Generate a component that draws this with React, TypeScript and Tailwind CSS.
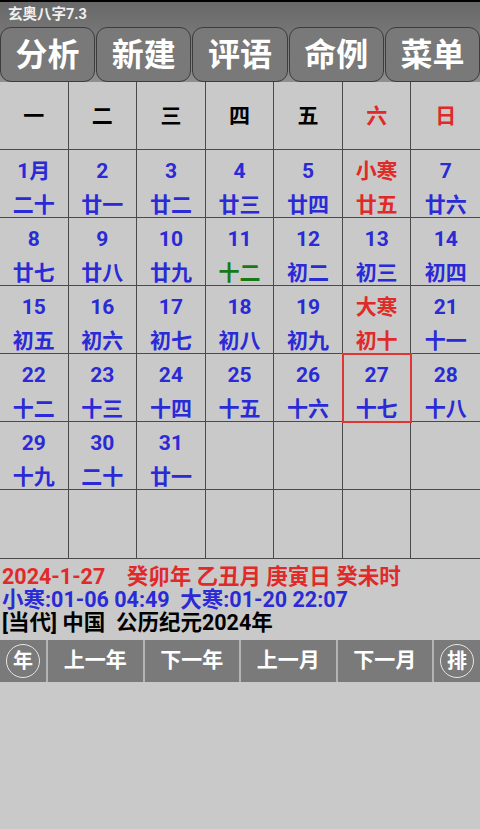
import React from "react";

type Day = { top: string; bottom: string; topColor?: string; bottomColor?: string; today?: boolean };

const BLUE = "text-[#2a2ad6]";
const RED = "text-[#e02a2a]";
const GREEN = "text-[#177a17]";

const tabs = ["分析", "新建", "评语", "命例", "菜单"];
const weekdays = ["一", "二", "三", "四", "五", "六", "日"];

const lunar = [
  "二十", "廿一", "廿二", "廿三", "廿四", "廿五", "廿六",
  "廿七", "廿八", "廿九", "十二", "初二", "初三", "初四",
  "初五", "初六", "初七", "初八", "初九", "初十", "十一",
  "十二", "十三", "十四", "十五", "十六", "十七", "十八",
  "十九", "二十", "廿一",
];

function buildDays(): (Day | null)[] {
  const days: (Day | null)[] = lunar.map((l, i) => {
    const n = i + 1;
    const d: Day = { top: n === 1 ? "1月" : String(n), bottom: l, topColor: BLUE, bottomColor: BLUE };
    if (n === 6) { d.top = "小寒"; d.topColor = RED; d.bottomColor = RED; }
    if (n === 20) { d.top = "大寒"; d.topColor = RED; d.bottomColor = RED; }
    if (n === 11) d.bottomColor = GREEN;
    if (n === 27) d.today = true;
    return d;
  });
  while (days.length < 42) days.push(null);
  return days;
}

export default function App() {
  const days = buildDays();

  return (
    <div className="w-[480px] min-h-[829px] bg-[#c9c9c9] font-['Roboto','Noto_Sans_CJK_SC',sans-serif] font-bold">
      <div className="h-[2px] bg-black" />
      {/* title + tabs */}
      <div className="bg-gradient-to-b from-[#686868] to-[#8e8e8e]">
        <div className="h-[25px] pl-2 text-[14.5px] leading-[25px] text-[#f0f0f0]">玄奥八字7.3</div>
        <div className="flex gap-[1px] h-[55px]">
          {tabs.map((t) => (
            <div
              key={t}
              className="flex-1 rounded-[11px] border border-[#3c3c3c] bg-[#797979] flex items-center justify-center text-white text-[32px] leading-none"
            >
              {t}
            </div>
          ))}
        </div>
      </div>

      {/* calendar */}
      <div className="grid grid-cols-7 border-b border-[#4a4a4a]">
        {weekdays.map((w, i) => (
          <div
            key={w}
            className={`h-[68px] pt-[3px] flex items-center justify-center text-[21px] border-b border-[#4a4a4a] ${i < 6 ? "border-r" : ""} ${i >= 5 ? RED : "text-black"}`}
          >
            {w}
          </div>
        ))}
        {days.map((d, i) => (
          <div
            key={i}
            className={`relative h-[68px] pt-[4px] flex flex-col items-center text-[21px] leading-[34px] border-[#4a4a4a] ${i % 7 < 6 ? "border-r" : ""} ${i < 35 ? "border-b" : ""} ${d?.today ? "z-10 outline-2 outline-[#e03535] -outline-offset-1" : ""}`}
          >
            {d && (
              <>
                <span className={d.topColor}>{d.top}</span>
                <span className={d.bottomColor}>{d.bottom}</span>
              </>
            )}
          </div>
        ))}
      </div>

      {/* info */}
      <div className="pt-[6px] pl-[2px] text-[21.5px] leading-[23px] whitespace-pre">
        <div className={RED}>2024-1-27    癸卯年 乙丑月 庚寅日 癸未时</div>
        <div className={BLUE}>小寒:01-06 04:49  大寒:01-20 22:07</div>
        <div className="text-black">[当代] 中国  公历纪元2024年</div>
      </div>

      {/* bottom bar */}
      <div className="mt-[6px] flex gap-[2px] h-[42px] bg-[#b4b4b4] text-white text-[21px]">
        <div className="w-[46px] bg-[#7a7a7a] flex items-center justify-center">
          <span className="w-[34px] h-[34px] rounded-full border border-[#e6e6e6] flex items-center justify-center text-[20px]">年</span>
        </div>
        {["上一年", "下一年", "上一月", "下一月"].map((b) => (
          <div key={b} className="flex-1 bg-[#7a7a7a] flex items-center justify-center">{b}</div>
        ))}
        <div className="w-[46px] bg-[#7a7a7a] flex items-center justify-center">
          <span className="w-[34px] h-[34px] rounded-full border border-[#e6e6e6] flex items-center justify-center text-[20px]">排</span>
        </div>
      </div>
    </div>
  );
}
